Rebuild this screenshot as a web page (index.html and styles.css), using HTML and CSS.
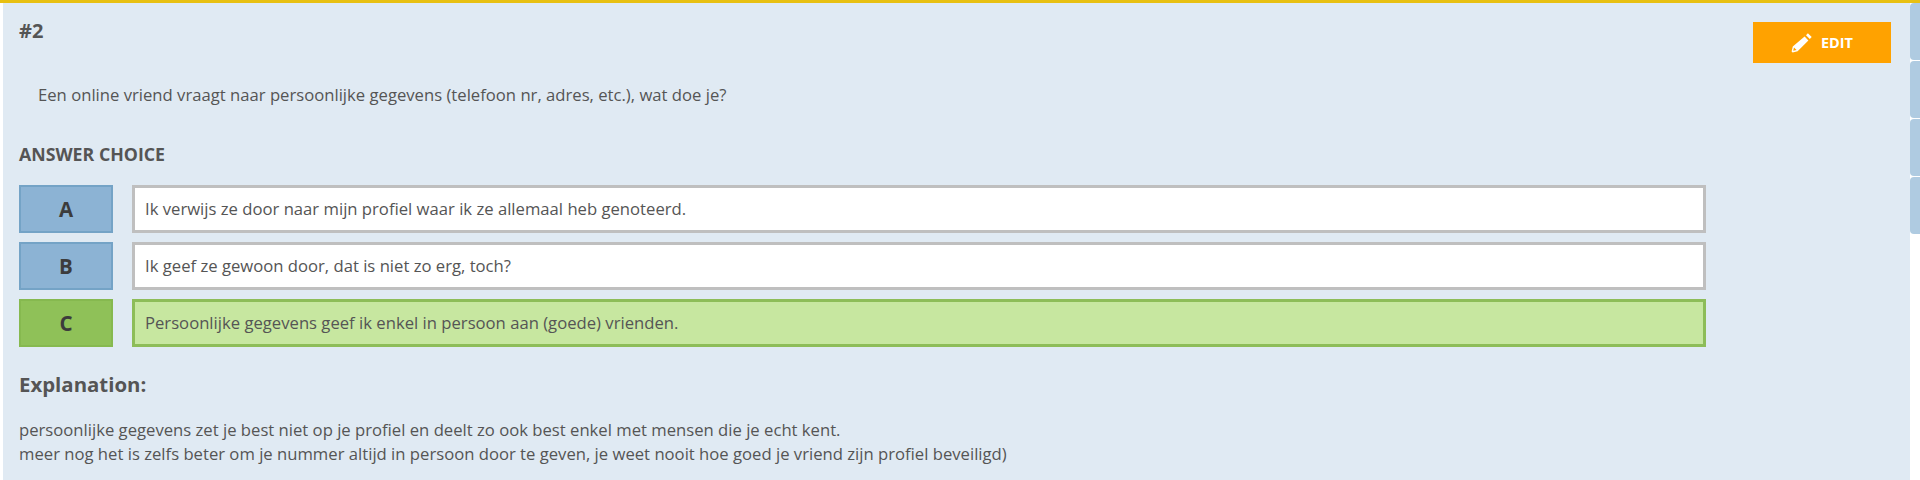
FILE: index.html
```html
<!DOCTYPE html>
<html lang="nl">
<head>
<meta charset="utf-8">
<title>Question 2</title>
<link rel="stylesheet" href="styles.css">
</head>
<body>
<div class="page">
  <main class="panel">
    <div class="head">
      <h2 class="num">#2</h2>
      <button class="edit" type="button">
        <svg class="pencil" viewBox="0 0 21 20" width="21" height="20"><path d="M13.6 3.6 17.4 7.4 6.6 18.2 1.6 19.4 0.6 18.4 1.8 13.4ZM3 14.4 2.2 17.8 5.6 17ZM15 2.2 16.9 0.3 20.7 4.1 18.8 6Z" fill-rule="evenodd"/></svg>
        <span>EDIT</span>
      </button>
    </div>
    <p class="question">Een online vriend vraagt naar persoonlijke gegevens (telefoon nr, adres, etc.), wat doe je?</p>
    <h3 class="label">ANSWER CHOICE</h3>
    <div class="choices">
      <div class="choice">
        <div class="letter">A</div>
        <div class="answer">Ik verwijs ze door naar mijn profiel waar ik ze allemaal heb genoteerd.</div>
      </div>
      <div class="choice">
        <div class="letter">B</div>
        <div class="answer">Ik geef ze gewoon door, dat is niet zo erg, toch?</div>
      </div>
      <div class="choice correct">
        <div class="letter">C</div>
        <div class="answer">Persoonlijke gegevens geef ik enkel in persoon aan (goede) vrienden.</div>
      </div>
    </div>
    <h3 class="expl-title">Explanation:</h3>
    <p class="expl">persoonlijke gegevens zet je best niet op je profiel en deelt zo ook best enkel met mensen die je echt kent.<br>meer nog het is zelfs beter om je nummer altijd in persoon door te geven, je weet nooit hoe goed je vriend zijn profiel beveiligd)</p>
  </main>
  <aside class="tabs">
    <div class="tab"></div>
    <div class="tab"></div>
    <div class="tab"></div>
    <div class="tab"></div>
  </aside>
</div>
</body>
</html>
```
FILE: styles.css
```css
* { box-sizing: border-box; }
html, body { margin: 0; height: 100%; overflow: hidden; background: #fff; }
body { font-family: "Open Sans", sans-serif; color: #555; font-size: 16.67px; }
.page { display: flex; height: 480px; padding-left: 3px; border-top: 3px solid #e8c011; }
.panel {
  width: 1907px;
  height: 477px;
  background: #e0eaf3;
  padding: 0 19px 0 16px;
}
.head { display: flex; justify-content: space-between; align-items: flex-start; height: 60px; }
.num { margin: 14px 0 0; font-size: 20px; line-height: 27px; font-weight: 700; color: #555; }
.edit {
  margin: 19px 0 0;
  width: 138px;
  height: 41px;
  background: #ffa200;
  border: 0;
  color: #fff;
  display: flex;
  align-items: center;
  justify-content: center;
  gap: 9px;
  font: 700 14.5px "Open Sans", sans-serif;
  padding: 0;
}
.pencil { fill: #fff; display: block; }
.question { margin: 21px 0 0 19px; line-height: 22px; }
.label { margin: 37px 0 0; font-size: 17.75px; line-height: 23px; font-weight: 700; color: #555; }
.choices { display: flex; flex-direction: column; gap: 9px; margin-top: 19px; }
.choice { display: flex; gap: 19px; height: 48px; }
.letter {
  width: 94px;
  background: #8cb3d4;
  border: 2px solid #74a3c6;
  display: flex;
  align-items: center;
  justify-content: center;
  font-size: 20.5px;
  font-weight: 700;
  color: #3c3c3c;
}
.answer {
  width: 1574px;
  background: #fff;
  border: 3px solid #bfbfbf;
  display: flex;
  align-items: center;
  padding: 0 0 2px 10px;
}
.correct .letter { background: #8fc158; border-color: #86b94f; }
.correct .answer { background: #c7e7a0; border-color: #8dbd58; }
.expl-title { margin: 23px 0 0; font-size: 20.4px; line-height: 28px; font-weight: 700; color: #555; }
.expl { margin: 20px 0 0; line-height: 23.5px; }
.tabs { display: flex; flex-direction: column; gap: 1px; width: 10px; }
.tab { height: 57px; background: #afcbe1; border-radius: 4px 0 0 4px; }
```
